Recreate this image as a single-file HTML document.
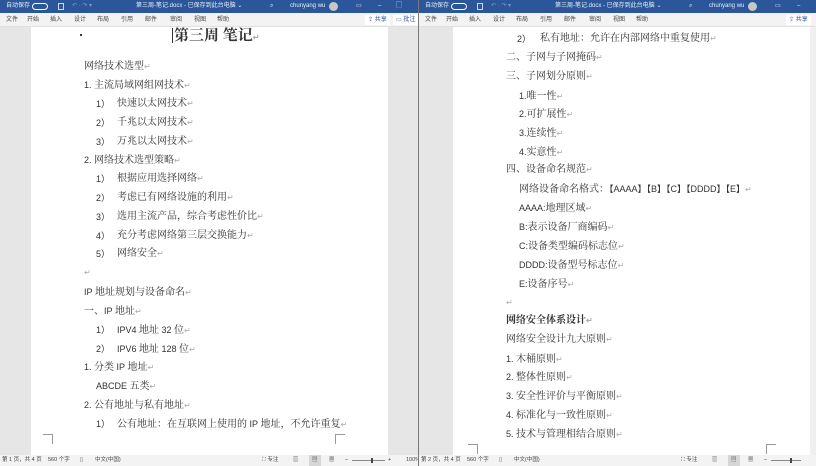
<!DOCTYPE html>
<html><head><meta charset="utf-8"><style>
*{margin:0;padding:0;box-sizing:border-box}
body{width:816px;height:466px;overflow:hidden;position:relative;background:#e6e6e6;font-family:"Liberation Serif","Noto Serif CJK SC",serif;}
.a{position:absolute;white-space:nowrap}
.title{background:#2b579a;height:13px;top:0;color:#e8eefa;font-family:"Liberation Sans","Noto Sans CJK SC",sans-serif;font-size:6px;line-height:13px}
.rib{background:#f3f3f3;height:14px;top:13px;font-family:"Liberation Sans","Noto Sans CJK SC",sans-serif;font-size:6px;color:#444;line-height:14px;border-bottom:1px solid #e0e0e0}
.status{background:#f3f3f3;top:455px;height:11px;font-family:"Liberation Sans","Noto Sans CJK SC",sans-serif;font-size:5.5px;color:#444;line-height:11px}
.page{background:#fff;top:27px;height:428px}
.t{position:absolute;white-space:nowrap;font-size:10px;line-height:12px;color:#333;transform:translateY(-6px)}
.s{font-family:"Liberation Sans","Noto Sans CJK SC",sans-serif;font-size:9px}
.r{color:#aaa;font-size:8px}
.cm{position:absolute;border-color:#999;border-style:solid;width:10px;height:10px}
</style></head><body>
<div class="a title" style="left:0;width:418px">
<span class="a" style="left:6px">自动保存</span>
<span class="a" style="left:32px;top:3px;width:16px;height:7px;border:1px solid #fff;border-radius:4px"></span>
<span class="a" style="left:58px;top:3px;width:6px;height:7px;border:1px solid #cfd8ea"></span>
<span class="a" style="left:72px;color:#7f98c4">↶ · ↷ ▾</span>
<span class="a" style="left:136px">第三周-笔记.docx - 已保存到此台电脑 ⌄</span>
<span class="a" style="left:270px">⌕</span>
<span class="a" style="left:290px">chunyang wu</span>
<span class="a" style="left:329px;top:2px;width:9px;height:9px;border-radius:50%;background:#c7c7c7"></span>
<span class="a" style="left:356px">▭</span><span class="a" style="left:378px">–</span><span class="a" style="left:396px">▢</span>
</div>
<div class="a rib" style="left:0;width:418px">
<span class="a" style="left:6px">文件</span><span class="a" style="left:27px">开始</span><span class="a" style="left:50px">插入</span><span class="a" style="left:74px">设计</span><span class="a" style="left:97px">布局</span><span class="a" style="left:121px">引用</span><span class="a" style="left:145px">邮件</span><span class="a" style="left:170px">审阅</span><span class="a" style="left:194px">视图</span><span class="a" style="left:217px">帮助</span>
<span class="a" style="left:365px;top:2px;height:10px;line-height:10px;background:#fff;color:#2b579a;padding:0 3px">⇪ 共享</span>
<span class="a" style="left:393px;top:2px;height:10px;line-height:10px;background:#fff;color:#2b579a;padding:0 3px">▭ 批注</span>
</div>
<div class="a page" style="left:31px;width:357px"></div>
<div class="a status" style="left:0;width:418px">
<span class="a" style="left:2px">第 1 页，共 4 页</span><span class="a" style="left:48px">560 个字</span><span class="a" style="left:80px">▯</span><span class="a" style="left:95px">中文(中国)</span>
<span class="a" style="left:262px">⛶ 专注</span><span class="a" style="left:293px">▥</span><span class="a" style="left:309px;background:#d6d6d6;padding:0 3px">▤</span><span class="a" style="left:329px">▦</span>
<span class="a" style="left:345px">–</span><span class="a" style="left:352px;top:5px;width:33px;height:1px;background:#888"></span><span class="a" style="left:371px;top:3px;width:2px;height:5px;background:#444"></span><span class="a" style="left:388px">+</span><span class="a" style="left:406px">100%</span>
</div>
<div class="a" style="left:418px;top:0;width:1px;height:466px;background:#777"></div>
<div class="a title" style="left:419px;width:397px">
<span class="a" style="left:6px">自动保存</span>
<span class="a" style="left:32px;top:3px;width:16px;height:7px;border:1px solid #fff;border-radius:4px"></span>
<span class="a" style="left:58px;top:3px;width:6px;height:7px;border:1px solid #cfd8ea"></span>
<span class="a" style="left:72px;color:#7f98c4">↶ · ↷ ▾</span>
<span class="a" style="left:136px">第三周-笔记.docx - 已保存到此台电脑 ⌄</span>
<span class="a" style="left:270px">⌕</span>
<span class="a" style="left:290px">chunyang wu</span>
<span class="a" style="left:329px;top:2px;width:9px;height:9px;border-radius:50%;background:#c7c7c7"></span>
<span class="a" style="left:356px">▭</span><span class="a" style="left:378px">–</span>
</div>
<div class="a rib" style="left:419px;width:397px">
<span class="a" style="left:6px">文件</span><span class="a" style="left:27px">开始</span><span class="a" style="left:50px">插入</span><span class="a" style="left:74px">设计</span><span class="a" style="left:97px">布局</span><span class="a" style="left:121px">引用</span><span class="a" style="left:145px">邮件</span><span class="a" style="left:170px">审阅</span><span class="a" style="left:194px">视图</span><span class="a" style="left:217px">帮助</span>
<span class="a" style="left:367px;top:2px;height:10px;line-height:10px;background:#fff;color:#2b579a;padding:0 3px">⇪ 共享</span>
</div>
<div class="a page" style="left:453px;width:357px"></div>
<div class="a" style="left:810px;top:27px;width:6px;height:428px;background:#f0f0f0"></div>
<div class="a status" style="left:419px;width:397px">
<span class="a" style="left:2px">第 2 页，共 4 页</span><span class="a" style="left:48px">560 个字</span><span class="a" style="left:80px">▯</span><span class="a" style="left:95px">中文(中国)</span>
<span class="a" style="left:262px">⛶ 专注</span><span class="a" style="left:293px">▥</span><span class="a" style="left:309px;background:#d6d6d6;padding:0 3px">▤</span><span class="a" style="left:329px">▦</span>
<span class="a" style="left:345px">–</span><span class="a" style="left:352px;top:5px;width:30px;height:1px;background:#888"></span><span class="a" style="left:371px;top:3px;width:2px;height:5px;background:#444"></span>
</div>

<span class="a" style="left:80px;top:34px;width:2px;height:2px;background:#333"></span>
<span class="a" style="left:172px;top:28px;width:1px;height:15px;background:#333"></span>
<div class="t" style="left:174px;top:36px;font-size:15px;line-height:16px;font-weight:bold;transform:translateY(-8px)">第三周 笔记<span class="r">↵</span></div>
<div class="t" style="left:84px;top:67px">网络技术选型<span class="r">↵</span></div>
<div class="t" style="left:84px;top:85px"><span class="s">1.</span> 主流局域网组网技术<span class="r">↵</span></div>
<div class="t" style="left:96px;top:104px"><span class="s">1）</span></div><div class="t" style="left:117px;top:104px">快速以太网技术<span class="r">↵</span></div>
<div class="t" style="left:96px;top:123px"><span class="s">2）</span></div><div class="t" style="left:117px;top:123px">千兆以太网技术<span class="r">↵</span></div>
<div class="t" style="left:96px;top:142px"><span class="s">3）</span></div><div class="t" style="left:117px;top:142px">万兆以太网技术<span class="r">↵</span></div>
<div class="t" style="left:84px;top:160px"><span class="s">2.</span> 网络技术选型策略<span class="r">↵</span></div>
<div class="t" style="left:96px;top:179px"><span class="s">1）</span></div><div class="t" style="left:117px;top:179px">根据应用选择网络<span class="r">↵</span></div>
<div class="t" style="left:96px;top:198px"><span class="s">2）</span></div><div class="t" style="left:117px;top:198px">考虑已有网络设施的利用<span class="r">↵</span></div>
<div class="t" style="left:96px;top:217px"><span class="s">3）</span></div><div class="t" style="left:117px;top:217px">选用主流产品，综合考虑性价比<span class="r">↵</span></div>
<div class="t" style="left:96px;top:236px"><span class="s">4）</span></div><div class="t" style="left:117px;top:236px">充分考虑网络第三层交换能力<span class="r">↵</span></div>
<div class="t" style="left:96px;top:254px"><span class="s">5）</span></div><div class="t" style="left:117px;top:254px">网络安全<span class="r">↵</span></div>
<div class="t" style="left:84px;top:273px"><span class="r">↵</span></div>
<div class="t" style="left:84px;top:292px"><span class="s">IP</span> 地址规划与设备命名<span class="r">↵</span></div>
<div class="t" style="left:84px;top:311px">一、<span class="s">IP</span> 地址<span class="r">↵</span></div>
<div class="t" style="left:96px;top:330px"><span class="s">1）</span></div><div class="t" style="left:117px;top:330px"><span class="s">IPV4</span> 地址 <span class="s">32</span> 位<span class="r">↵</span></div>
<div class="t" style="left:96px;top:349px"><span class="s">2）</span></div><div class="t" style="left:117px;top:349px"><span class="s">IPV6</span> 地址 <span class="s">128</span> 位<span class="r">↵</span></div>
<div class="t" style="left:84px;top:367px"><span class="s">1.</span> 分类 <span class="s">IP</span> 地址<span class="r">↵</span></div>
<div class="t" style="left:96px;top:386px"><span class="s">ABCDE</span> 五类<span class="r">↵</span></div>
<div class="t" style="left:84px;top:405px"><span class="s">2.</span> 公有地址与私有地址<span class="r">↵</span></div>
<div class="t" style="left:96px;top:424px"><span class="s">1）</span></div><div class="t" style="left:117px;top:424px">公有地址：在互联网上使用的 <span class="s">IP</span> 地址，不允许重复<span class="r">↵</span></div>
<div class="cm" style="left:43px;top:434px;border-width:1px 1px 0 0"></div>
<div class="cm" style="left:335px;top:434px;border-width:1px 0 0 1px"></div>

<div class="t" style="left:517px;top:39px"><span class="s">2）</span></div><div class="t" style="left:540px;top:39px">私有地址：允许在内部网络中重复使用<span class="r">↵</span></div>
<div class="t" style="left:506px;top:58px">二、子网与子网掩码<span class="r">↵</span></div>
<div class="t" style="left:506px;top:77px">三、子网划分原则<span class="r">↵</span></div>
<div class="t" style="left:519px;top:96px"><span class="s">1.</span>唯一性<span class="r">↵</span></div>
<div class="t" style="left:519px;top:114px"><span class="s">2.</span>可扩展性<span class="r">↵</span></div>
<div class="t" style="left:519px;top:133px"><span class="s">3.</span>连续性<span class="r">↵</span></div>
<div class="t" style="left:519px;top:152px"><span class="s">4.</span>实意性<span class="r">↵</span></div>
<div class="t" style="left:506px;top:170px">四、设备命名规范<span class="r">↵</span></div>
<div class="t" style="left:519px;top:189px">网络设备命名格式：<span class="s">【AAAA】【B】【C】【DDDD】【E】</span><span class="r">↵</span></div>
<div class="t" style="left:519px;top:208px"><span class="s">AAAA:</span>地理区域<span class="r">↵</span></div>
<div class="t" style="left:519px;top:227px"><span class="s">B:</span>表示设备厂商编码<span class="r">↵</span></div>
<div class="t" style="left:519px;top:246px"><span class="s">C:</span>设备类型编码标志位<span class="r">↵</span></div>
<div class="t" style="left:519px;top:265px"><span class="s">DDDD:</span>设备型号标志位<span class="r">↵</span></div>
<div class="t" style="left:519px;top:284px"><span class="s">E:</span>设备序号<span class="r">↵</span></div>
<div class="t" style="left:506px;top:303px"><span class="r">↵</span></div>
<div class="t" style="left:506px;top:321px;font-weight:bold">网络安全体系设计<span class="r">↵</span></div>
<div class="t" style="left:506px;top:340px">网络安全设计九大原则<span class="r">↵</span></div>
<div class="t" style="left:506px;top:359px"><span class="s">1.</span> 木桶原则<span class="r">↵</span></div>
<div class="t" style="left:506px;top:377px"><span class="s">2.</span> 整体性原则<span class="r">↵</span></div>
<div class="t" style="left:506px;top:396px"><span class="s">3.</span> 安全性评价与平衡原则<span class="r">↵</span></div>
<div class="t" style="left:506px;top:415px"><span class="s">4.</span> 标准化与一致性原则<span class="r">↵</span></div>
<div class="t" style="left:506px;top:434px"><span class="s">5.</span> 技术与管理相结合原则<span class="r">↵</span></div>
<div class="cm" style="left:468px;top:444px;border-width:1px 1px 0 0"></div>
<div class="cm" style="left:766px;top:444px;border-width:1px 0 0 1px"></div>
</body></html>
